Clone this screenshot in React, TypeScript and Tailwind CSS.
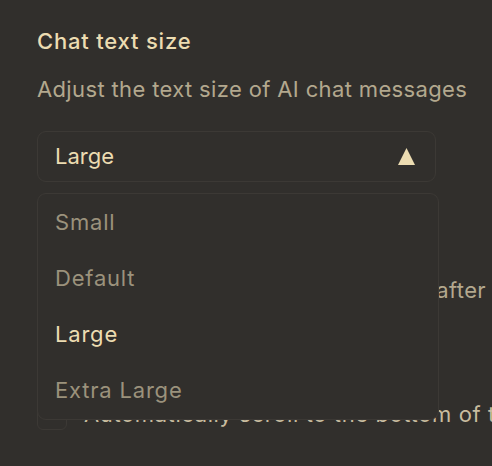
import React from "react";

export default function App() {
  const options = ["Small", "Default", "Large", "Extra Large"];
  return (
    <div
      className="relative w-[492px] h-[466px] overflow-hidden bg-[#312f2c]"
      style={{ fontFamily: "Inter, 'Noto Sans', sans-serif" }}
    >
      <div className="pl-[37px] pt-[26px]">
        <div className="text-[22px] leading-[30px] text-[#ecdcb1] font-medium tracking-[0.8px]">Chat text size</div>
        <div className="mt-[18px] text-[22px] leading-[30px] text-[#b3a88e] tracking-[0.36px] whitespace-nowrap">
          Adjust the text size of AI chat messages
        </div>
        <div className="relative mt-[27px] w-[399px] h-[51px] rounded-[9px] border border-[#3c3935] flex items-center justify-between pl-[17px] pr-[20px]">
          <span className="text-[22px] text-[#ecdcb1]">Large</span>
          <svg width="17" height="17" viewBox="0 0 17 17">
            <polygon points="8.5,0 17,17 0,17" fill="#ecdcb1" />
          </svg>
        </div>
        <div className="mt-[48px] text-[22px] leading-[30px] text-[#ecdcb1] whitespace-nowrap">Auto-scroll</div>
        <div className="mt-[15px] w-[449px] flex justify-end overflow-hidden">
          <span className="shrink-0 text-[22px] leading-[30px] text-[#b3a88e] tracking-[0.36px] whitespace-nowrap">
            Keep the conversation view pinned to the newest message after
          </span>
        </div>
        <div className="mt-[93px] flex items-center gap-[17px] whitespace-nowrap">
          <div className="shrink-0 w-[30px] h-[30px] rounded-[6px] border border-[#3c3935] flex items-center justify-center">
            <svg width="10" height="8" viewBox="0 0 10 8">
              <path d="M1.5 2 L5 5.5 L8.5 2" fill="none" stroke="#ecdcb1" strokeWidth="1.8" />
            </svg>
          </div>
          <span className="shrink-0 text-[22px] text-[#c8bc9f] tracking-[0.6px]">Automatically scroll to the bottom of the chat</span>
        </div>
      </div>

      <div className="absolute left-[37px] top-[193px] w-[402px] rounded-[9px] border border-[#3c3935] bg-[#312f2c] overflow-hidden">
        {options.map((o) => (
          <div
            key={o}
            className={`h-[56.25px] flex items-center pl-[17px] text-[22px] tracking-[0.8px] ${
              o === "Large" ? "text-[#ecdcb1]" : "text-[#9b927c]"
            }`}
          >
            {o}
          </div>
        ))}
      </div>
    </div>
  );
}
